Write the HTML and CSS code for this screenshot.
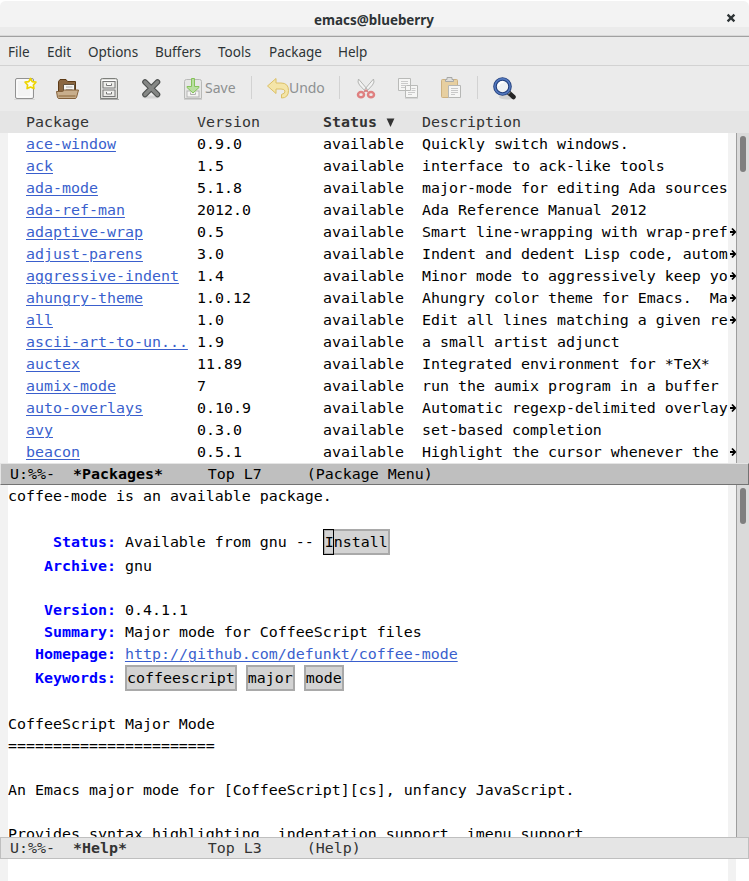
FILE: index.html
```html
<!DOCTYPE html>
<html lang="en">
<head>
<meta charset="utf-8">
<title>emacs@blueberry</title>
<link rel="stylesheet" href="styles.css">
</head>
<body>
<div class="window">
  <header class="titlebar">
    <span class="title">emacs@blueberry</span>
    <svg class="close" viewBox="0 0 10 10"><path d="M1.6 1.6 8.4 8.4M8.4 1.6 1.6 8.4" stroke="#2e3436" stroke-width="2.3"/></svg>
  </header>
  <nav class="menubar">
    <span class="m-file">File</span><span class="m-edit">Edit</span><span class="m-options">Options</span><span class="m-buffers">Buffers</span><span class="m-tools">Tools</span><span class="m-package">Package</span><span>Help</span>
  </nav>
  <div class="toolbar">
    <svg class="icon new" viewBox="0 0 24 24">
      <path d="M1 24h21" stroke="#c4c4c4"/>
      <rect x="2.5" y="2.5" width="18" height="20" rx="1.5" fill="#f3f3f3" stroke="#929292"/>
      <path d="M4 4h14v17H4z" fill="none" stroke="#fff"/>
      <path d="m17.500 2.500 1.700 3.200 3.700.5-2.500 2.800.5 3.500-3.400-1.500-3.400 1.500.5-3.500-2.500-2.800 3.700-.5z" fill="#fffef0" stroke="#edd400" stroke-width="1.700" stroke-linejoin="round"/>
    </svg>
    <svg class="icon open" viewBox="0 0 24 24">
      <path d="M3.500 19V5.500l1.500-2h6l1.500 2h8V19z" fill="#8a6742" stroke="#5d3b16"/>
      <path d="M8.500 17V8.500h11V17z" fill="#f7f7f5" stroke="#62533f"/>
      <path d="M11 11h6.500M11 13.500h6.500" stroke="#aaa"/>
      <path d="M1.500 15.500h6l2-1.500h14l-2 7.500q-.5 1-1.500 1H4q-1 0-1.500-1z" fill="#c8ae8c" stroke="#83603a"/>
      <path d="M3.500 20h17" stroke="#a88961" stroke-width="2"/>
    </svg>
    <svg class="icon cabinet" viewBox="0 0 24 24">
      <path d="M3 23.500h19" stroke="#aaa"/>
      <path d="M3.500 22.500v-18q0-2 2-2h13q2 0 2 2v18z" fill="#dededb" stroke="#7d7f7b"/>
      <path d="M5 4.500h14M5 13h14" stroke="#fff"/>
      <rect x="6" y="5.500" width="12" height="6.500" fill="#ecece9" stroke="#777"/>
      <rect x="6" y="14" width="12" height="6.500" fill="#ecece9" stroke="#777"/>
      <path d="M9.500 7.500v2h5v-2M9.500 16v2h5v-2" fill="#fff" stroke="#777"/>
    </svg>
    <svg class="icon kill" viewBox="0 0 24 24">
      <ellipse cx="12" cy="21" rx="9" ry="1.600" fill="#d4d4d4"/>
      <path d="m6 6 12.500 12.500M18.500 6 6 18.500" stroke="#4c4f4e" stroke-width="5.600" stroke-linecap="round"/>
      <path d="m6 6 12.500 12.500M18.500 6 6 18.500" stroke="#858785" stroke-width="3.400" stroke-linecap="round"/>
    </svg>
    <svg class="icon save" viewBox="0 0 24 24">
      <path d="M3.500 22.500v-17q0-2 2-2h13q2 0 2 2v17z" fill="#e6e6e5" stroke="#b8b9b7"/>
      <path d="M3 23.500h18" stroke="#cfcfcf"/>
      <rect x="6" y="15" width="12" height="6" fill="#f4f4f2" stroke="#b5b5b5"/>
      <path d="M9.500 16.500v2h5v-2" fill="none" stroke="#b0b0b0"/>
      <path d="M10.500 2.500h3v8h4.500v1l-6 5.500L6 11.500v-1h4.500z" fill="#b9dea0" stroke="#85c35a"/>
    </svg>
    <span class="label save-label">Save</span>
    <i class="sep"></i>
    <svg class="icon undo" viewBox="0 0 24 24">
      <path d="M1.500 10 10 2.500V7h5q7.500 0 7.500 7.500T15.500 22v-3.500q4-1 3.500-3.500-.5-2-4-2H10v4.500z" fill="#f4e5a8" stroke="#dcc066" stroke-linejoin="round"/>
    </svg>
    <span class="label undo-label">Undo</span>
    <i class="sep"></i>
    <svg class="icon cut" viewBox="0 0 24 24">
      <path d="M4.500 3q-1.500 3 1 6l6.500 7 1.500-2.500zM19.500 3q1.500 3-1 6L12 16l-1.500-2.500z" fill="#f3f3f3" stroke="#b3b4b2"/>
      <g fill="#ededed" stroke="#df8080" stroke-width="2.500"><ellipse cx="7" cy="18.700" rx="3" ry="2.600"/><ellipse cx="17" cy="18.700" rx="3" ry="2.600"/></g>
      <path d="m10 16 2-2 2 2" fill="none" stroke="#df8080" stroke-width="1.500"/>
    </svg>
    <svg class="icon copy" viewBox="0 0 24 24">
      <g fill="#f6f6f5" stroke="#b9bab8"><path d="M9.500 9.500h12v12h-12zM2.500 2.500h12v12h-12z"/></g>
      <path d="M5 5.500h7M5 7.500h7M5 9.500h6M5 11.500h4M15.500 12.500h4M15.500 14.500h4M12 16.500h7M12 18.500h4" stroke="#cacaca"/>
      <path d="M9 22.500h13" stroke="#d6d6d6"/>
    </svg>
    <svg class="icon paste" viewBox="0 0 24 24">
      <rect x="2.500" y="3.500" width="16" height="18" rx="1" fill="#e7cfa0" stroke="#cdb180"/>
      <path d="M6.500 5.500v-2H8v-2h5v2h1.500v2z" fill="#dededc" stroke="#a7a8a6"/>
      <path d="M9.500 9.500h12v12h-12z" fill="#f6f6f5" stroke="#b6b7b5"/>
      <path d="M12 12.500h7M12 14.500h7M12 16.500h7M12 18.500h4" stroke="#c8c8c8"/>
    </svg>
    <i class="sep"></i>
    <svg class="icon search" viewBox="0 0 24 24">
      <ellipse cx="15" cy="21" rx="8" ry="2.500" fill="#d2d2d1"/>
      <path d="m16.500 16.500 5 4.500" stroke="#252525" stroke-width="4.500" stroke-linecap="round"/>
      <path d="m15.500 15.500 2 2" stroke="#9a9a92" stroke-width="3"/>
      <circle cx="10.500" cy="10.500" r="7.500" fill="#f0f2f3" stroke="#223f7c" stroke-width="3.600"/>
      <circle cx="10.500" cy="10.500" r="7.600" fill="none" stroke="#5378bd" stroke-width="1.600"/>
      <path d="M6.500 10q.5-4 5-4" fill="none" stroke="#fff" stroke-width="2"/>
    </svg>
  </div>

  <div class="header-line row"><span>Package</span><span>Version</span><b>Status <svg class="tri" viewBox="0 0 9 10"><path d="M.6.500h7.800L4.500 9z" fill="#333"/></svg></b><span>Description</span></div>
  <section class="pane packages">
    <div class="fringe"></div>
    <div class="buffer">
      <div class="row"><a>ace-window</a><span>0.9.0</span><span>available</span><span>Quickly switch windows.</span></div>
      <div class="row"><a>ack</a><span>1.5</span><span>available</span><span>interface to ack-like tools</span></div>
      <div class="row"><a>ada-mode</a><span>5.1.8</span><span>available</span><span>major-mode for editing Ada sources</span></div>
      <div class="row"><a>ada-ref-man</a><span>2012.0</span><span>available</span><span>Ada Reference Manual 2012</span></div>
      <div class="row"><a>adaptive-wrap</a><span>0.5</span><span>available</span><span>Smart line-wrapping with wrap-pref</span></div>
      <div class="row"><a>adjust-parens</a><span>3.0</span><span>available</span><span>Indent and dedent Lisp code, autom</span></div>
      <div class="row"><a>aggressive-indent</a><span>1.4</span><span>available</span><span>Minor mode to aggressively keep yo</span></div>
      <div class="row"><a>ahungry-theme</a><span>1.0.12</span><span>available</span><span>Ahungry color theme for Emacs.  Ma</span></div>
      <div class="row"><a>all</a><span>1.0</span><span>available</span><span>Edit all lines matching a given re</span></div>
      <div class="row"><a>ascii-art-to-un...</a><span>1.9</span><span>available</span><span>a small artist adjunct</span></div>
      <div class="row"><a>auctex</a><span>11.89</span><span>available</span><span>Integrated environment for *TeX*</span></div>
      <div class="row"><a>aumix-mode</a><span>7</span><span>available</span><span>run the aumix program in a buffer</span></div>
      <div class="row"><a>auto-overlays</a><span>0.10.9</span><span>available</span><span>Automatic regexp-delimited overlay</span></div>
      <div class="row"><a>avy</a><span>0.3.0</span><span>available</span><span>set-based completion</span></div>
      <div class="row"><a>beacon</a><span>0.5.1</span><span>available</span><span>Highlight the cursor whenever the </span></div>
    </div>
    <div class="fringe marks">
      <i></i><i></i><i></i><i></i>
      <svg viewBox="0 0 8 22"><use href="#arrow"/></svg>
      <svg viewBox="0 0 8 22"><use href="#arrow"/></svg>
      <svg viewBox="0 0 8 22"><use href="#arrow"/></svg>
      <svg viewBox="0 0 8 22"><use href="#arrow"/></svg>
      <svg viewBox="0 0 8 22"><use href="#arrow"/></svg>
      <i></i><i></i><i></i>
      <svg viewBox="0 0 8 22"><use href="#arrow"/></svg>
      <i></i>
      <svg viewBox="0 0 8 22"><use href="#arrow"/></svg>
    </div>
    <div class="scrollbar"><div class="thumb"></div></div>
  </section>
  <div class="modeline active">U:%%-  <b>*Packages*</b>     Top L7     (Package Menu)</div>

  <section class="pane help">
    <div class="fringe"></div>
    <div class="buffer">
      <div class="line">coffee-mode is an available package.</div>
      <div class="line"></div>
      <div class="line tall">     <b>Status:</b> Available from gnu -- <span class="button cursor">Install</span></div>
      <div class="line">    <b>Archive:</b> gnu</div>
      <div class="line"></div>
      <div class="line">    <b>Version:</b> 0.4.1.1</div>
      <div class="line">    <b>Summary:</b> Major mode for CoffeeScript files</div>
      <div class="line">   <b>Homepage:</b> <a>http://github.com/defunkt/coffee-mode</a></div>
      <div class="line tall">   <b>Keywords:</b> <span class="button">coffeescript</span> <span class="button">major</span> <span class="button">mode</span></div>
      <div class="line"></div>
      <div class="line">CoffeeScript Major Mode</div>
      <div class="line">=======================</div>
      <div class="line"></div>
      <div class="line">An Emacs major mode for [CoffeeScript][cs], unfancy JavaScript.</div>
      <div class="line"></div>
      <div class="line">Provides syntax highlighting, indentation support, imenu support,</div>
    </div>
    <div class="fringe"></div>
    <div class="scrollbar"><div class="thumb"></div></div>
  </section>
  <div class="modeline">U:%%-  <b>*Help*</b>         Top L3     (Help)</div>
  <section class="pane echo"><div class="fringe"></div><div class="buffer"></div><div class="fringe"></div><div></div></section>
</div>
<svg class="defs" width="0" height="0"><defs><path id="arrow" d="M2 11h5M4 7.500 7.300 11 4 14.500" fill="none" stroke="#000" stroke-width="1.800"/></defs></svg>
</body>
</html>
```
FILE: styles.css
```css
*, *::before { box-sizing: border-box; }
body { margin: 0; background: #fff; overflow: hidden; }
svg { display: block; }
.defs { position: absolute; }
.window {
  width: 749px;
  height: 881px;
  display: flex;
  flex-direction: column;
  color: #000;
  font: 14.95px/22px "DejaVu Sans Mono", monospace;
}
.titlebar, .menubar, .toolbar {
  display: flex;
  align-items: center;
  flex: none;
  background: #ebebeb;
  color: #2e3436;
  font-family: "Noto Sans", "Open Sans", sans-serif;
  font-size: 13.5px;
}
.titlebar {
  height: 37px;
  padding: 1px 13px 0 0;
  border-top: 1px solid #fff;
  border-bottom: 1px solid #a1a1a1;
  border-radius: 6px 6px 0 0;
  background: linear-gradient(#f3f3f3 26px, #ebebeb 26px, #ebebeb 34px, #d8d8d8 34px);
}
.title { flex: 1; padding: 2px 0 0 22px; text-align: center; font-weight: 700; font-size: 13.4px; line-height: 20px; }
.close { width: 10px; height: 10px; margin-bottom: 2px; }
.menubar { height: 29px; padding: 2px 0 0 8px; border-bottom: 1px solid #d2d2d2; }
.m-file { width: 39px; }
.m-edit { width: 41px; }
.m-options { width: 67px; }
.m-buffers { width: 63px; }
.m-tools { width: 51px; }
.m-package { width: 69px; }
.toolbar { height: 45px; padding: 0 0 2px 13px; }
.icon { width: 24px; height: 24px; flex: none; margin-right: 18px; }
.label { color: #8d9091; font-size: 14px; }
.save { margin-right: 0; }
.save-label { width: 46px; }
.sep { width: 1px; height: 23px; background: #d2d2d2; }
.undo { margin: 0 -1px 0 14px; }
.undo-label { width: 50px; letter-spacing: -.1px; }
.cut { margin-left: 14px; }
.copy { margin-right: 19px; }
.paste { margin-right: 14px; }
.search { margin-left: 14px; }

.row {
  display: grid;
  grid-template-columns: 171px 126px 99px 1fr;
  height: 22px;
  padding-left: 18px;
  white-space: pre;
}
.row a { justify-self: start; }
.header-line { flex: none; padding-left: 26px; background: #e5e5e5; color: #333; }
.tri { display: inline-block; width: 9px; height: 10px; vertical-align: -1px; }
a { color: #3a5fcd; text-decoration: underline 1px; text-underline-offset: 2px; }
.pane { display: grid; grid-template-columns: 8px 720px 8px 13px; overflow: hidden; flex: none; }
.packages { height: 330px; }
.help { height: 352px; }
.echo { height: 22px; }
.buffer { overflow: hidden; }
.fringe { background: #f2f2f2; }
.marks { display: flex; flex-direction: column; }
.marks > * { width: 8px; height: 22px; flex: none; }
.scrollbar { padding: 3px 0 0 3px; border-left: 1px solid #9d9d9d; background: #dadada; }
.thumb { width: 6px; height: 36px; border-radius: 3px; background: #7f7f7f; }
.modeline {
  flex: none;
  height: 22px;
  padding-left: 9px;
  border: 1px solid #bfbfbf;
  background: #e5e5e5;
  color: #333;
  line-height: 20px;
  white-space: pre;
}
.active { border-color: #e5e5e5 #737373 #737373 #e5e5e5; background: #bfbfbf; color: #000; }
.line { height: 22px; white-space: pre; }
.tall { height: 26px; line-height: 26px; }
.line b { color: #00f; }
.button { display: inline-block; vertical-align: top; position: relative; height: 26px; border: 2px solid #a9a9a9; background: #d3d3d3; line-height: 22px; }
.cursor::before { content: ""; position: absolute; left: -2px; top: -2px; width: 11px; height: 26px; border: 1px solid #000; }
```
